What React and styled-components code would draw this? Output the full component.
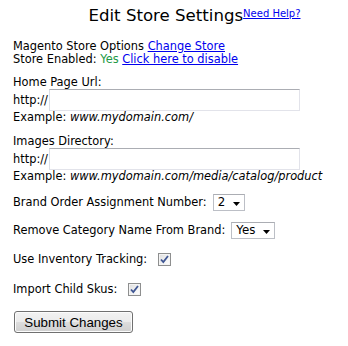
import React from "react"
import styled, { createGlobalStyle } from "styled-components"

const GlobalStyle = createGlobalStyle`
  html, body {
    margin: 0;
    padding: 0;
    background: #fff;
  }
  body {
    font-family: "DejaVu Sans", Verdana, sans-serif;
    font-size: 11.4px;
    color: #000;
  }
`

const SelectBox = ({ value, width }) => (
  <StyledSelect $width={width}>
    <span>{value}</span>
    <svg width="7" height="4" viewBox="0 0 7 4">
      <path d="M0 0 H7 L3.5 4 Z" fill="#000" />
    </svg>
  </StyledSelect>
)

const CheckBox = () => (
  <StyledCheck>
    <svg width="9" height="9" viewBox="0 0 9 9">
      <path
        d="M1 4.5 L3.3 7 L8 1"
        fill="none"
        stroke="#3f5693"
        strokeWidth="1.8"
      />
    </svg>
  </StyledCheck>
)

const App = () => {
  return (
    <Page>
      <GlobalStyle />
      <Header>
        <Title>Edit Store Settings</Title>
        <HelpLink href="#">Need Help?</HelpLink>
      </Header>

      <Info>
        <div>
          Magento Store Options <Link href="#">Change Store</Link>
        </div>
        <div>
          Store Enabled: <Enabled>Yes</Enabled>{" "}
          <Link href="#">Click here to disable</Link>
        </div>
      </Info>

      <Field>
        <div>Home Page Url:</div>
        <InputRow>
          <span>http://</span>
          <TextInput type="text" />
        </InputRow>
        <div>
          Example: <em>www.mydomain.com/</em>
        </div>
      </Field>

      <Field>
        <div>Images Directory:</div>
        <InputRow>
          <span>http://</span>
          <TextInput type="text" />
        </InputRow>
        <div>
          Example: <em>www.mydomain.com/media/catalog/product</em>
        </div>
      </Field>

      <OptionRow>
        <span>Brand Order Assignment Number:</span>
        <SelectBox value="2" width={32} />
      </OptionRow>

      <OptionRow>
        <span>Remove Category Name From Brand:</span>
        <SelectBox value="Yes" width={44} />
      </OptionRow>

      <OptionRow $check>
        <span>Use Inventory Tracking:</span>
        <CheckBox />
      </OptionRow>

      <OptionRow $check>
        <span>Import Child Skus:</span>
        <CheckBox />
      </OptionRow>

      <SubmitButton type="button">Submit Changes</SubmitButton>
    </Page>
  )
}

const Page = styled.div`
  display: flex;
  flex-direction: column;
  align-items: flex-start;
  padding: 6px 0 0 13px;
  line-height: 13px;
`

const Header = styled.div`
  display: flex;
  align-items: flex-start;
  justify-content: center;
  align-self: stretch;
  padding-left: 28px;
  margin-bottom: 15px;
`

const Title = styled.span`
  font-size: 16.6px;
  line-height: 19px;
`

const HelpLink = styled.a`
  font-size: 10px;
  line-height: 12px;
  margin-top: 2px;
  color: #0000ee;
  text-decoration: underline;
`

const Link = styled.a`
  color: #0000ee;
  text-decoration: underline;
`

const Enabled = styled.span`
  color: #229944;
`

const Info = styled.div`
  margin-bottom: 10px;
`

const Field = styled.div`
  margin-bottom: 11px;

  em {
    font-style: italic;
  }
`

const InputRow = styled.div`
  display: flex;
  align-items: center;
  gap: 1px;
`

const TextInput = styled.input`
  box-sizing: border-box;
  width: 251px;
  height: 22px;
  margin: 0;
  padding: 2px 3px;
  background: #fff;
  border: 1px solid #e2e3ea;
  border-top-color: #abadb3;
  border-left-color: #dbdfe6;
  font-family: inherit;
  font-size: 11px;
  outline: none;
`

const OptionRow = styled.div`
  display: flex;
  align-items: center;
  gap: ${({ $check }) => ($check ? "11px" : "6px")};
  height: ${({ $check }) => ($check ? "19px" : "17px")};
  margin-bottom: 11px;
`

const StyledSelect = styled.div`
  box-sizing: border-box;
  display: flex;
  align-items: center;
  justify-content: space-between;
  width: ${({ $width }) => $width}px;
  height: 17px;
  padding: 0 4px 0 4px;
  background: #fff;
  border: 1px solid #bcbfc6;
  border-top-color: #abadb3;
  font-size: 11.8px;

  svg {
    margin-top: 2px;
  }
`

const StyledCheck = styled.span`
  box-sizing: border-box;
  display: flex;
  align-items: center;
  justify-content: center;
  width: 13px;
  height: 13px;
  border: 1px solid #8e8f8f;
  background: linear-gradient(135deg, #dcdcdc 0%, #f4f4f4 60%, #ffffff 100%);
  box-shadow: inset 0 0 0 1px #f4f4f4;
`

const SubmitButton = styled.button`
  box-sizing: border-box;
  width: 119px;
  height: 22px;
  margin: 1px 0 0 1px;
  padding: 0;
  border: 1px solid #707070;
  border-radius: 3px;
  background: linear-gradient(
    to bottom,
    #f2f2f2 0%,
    #ebebeb 50%,
    #dddddd 51%,
    #cfcfcf 100%
  );
  box-shadow: inset 0 0 0 1px #fcfcfc;
  font-family: "Liberation Sans", Arial, sans-serif;
  font-size: 13.3px;
  color: #000;
`

export default App
